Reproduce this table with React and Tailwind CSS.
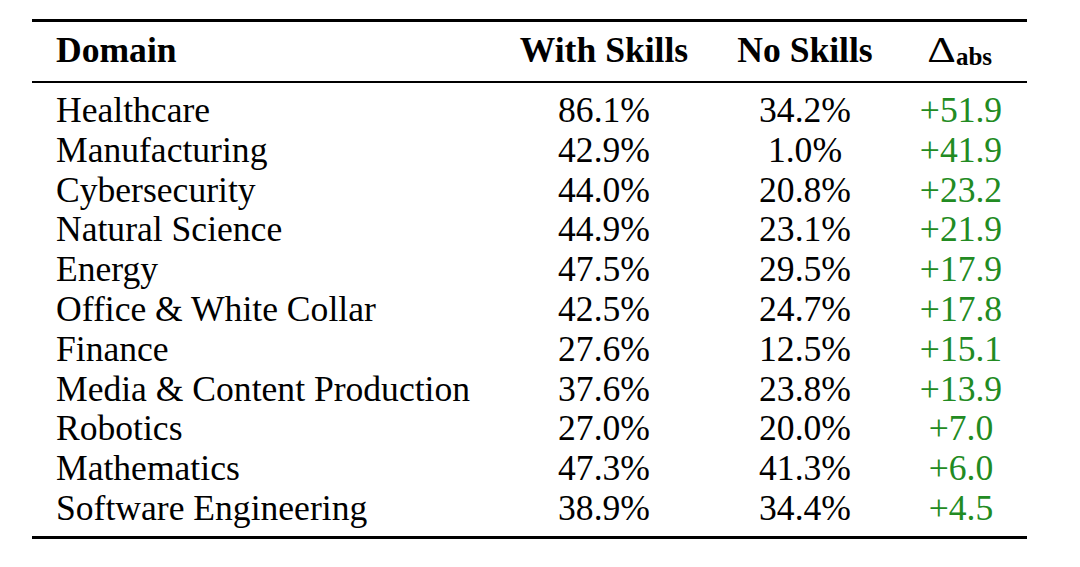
import React from "react";

const rows = [
  ["Healthcare", "86.1%", "34.2%", "+51.9"],
  ["Manufacturing", "42.9%", "1.0%", "+41.9"],
  ["Cybersecurity", "44.0%", "20.8%", "+23.2"],
  ["Natural Science", "44.9%", "23.1%", "+21.9"],
  ["Energy", "47.5%", "29.5%", "+17.9"],
  ["Office & White Collar", "42.5%", "24.7%", "+17.8"],
  ["Finance", "27.6%", "12.5%", "+15.1"],
  ["Media & Content Production", "37.6%", "23.8%", "+13.9"],
  ["Robotics", "27.0%", "20.0%", "+7.0"],
  ["Mathematics", "47.3%", "41.3%", "+6.0"],
  ["Software Engineering", "38.9%", "34.4%", "+4.5"],
];

export default function App() {
  return (
    <div className="w-[1080px] h-[567px] bg-white pt-[19px] pl-[32px] text-black font-['Liberation_Serif','Times_New_Roman',serif] text-[35.6px] leading-[40px]">
      <div className="w-[995px] border-t-[3px] border-b-[3px] border-black">
        <div className="grid grid-cols-[472px_200px_202px_110px] pt-[8px] pb-[7px] border-b-2 border-black font-bold">
          <div className="pl-[24px]">Domain</div>
          <div className="text-center">With Skills</div>
          <div className="text-center">No Skills</div>
          <div className="text-center font-normal">
            <span className="inline-block scale-x-125 mr-[3px]">Δ</span>
            <span className="font-bold text-[25px] relative top-[3px]">abs</span>
          </div>
        </div>
        <div className="pt-[7px] pb-[8px]">
          {rows.map((r) => (
            <div key={r[0]} className="grid grid-cols-[472px_200px_202px_110px] h-[39.8px]">
              <div className="pl-[24px]">{r[0]}</div>
              <div className="text-center">{r[1]}</div>
              <div className="text-center">{r[2]}</div>
              <div className="text-center text-[#228b22]">{r[3]}</div>
            </div>
          ))}
        </div>
      </div>
    </div>
  );
}
